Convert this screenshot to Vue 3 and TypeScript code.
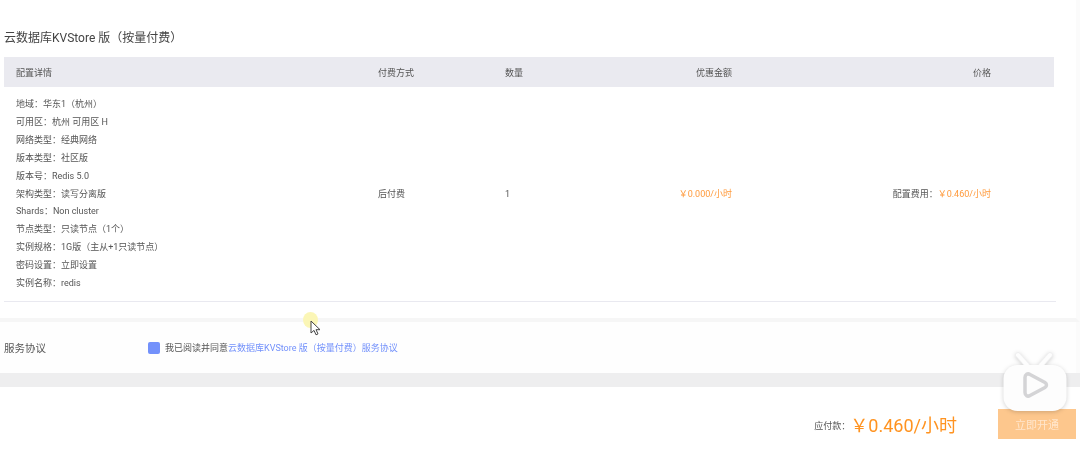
<script setup lang="ts">
const C = '\uFF1A'
const L = '\uFF08'
const R = '\uFF09'
const Y = '\uFFE5'
const title = `云数据库KVStore 版${L}按量付费${R}`
const details: string[] = [
  `地域${C}华东1${L}杭州${R}`,
  `可用区${C}杭州 可用区 H`,
  `网络类型${C}经典网络`,
  `版本类型${C}社区版`,
  `版本号${C}Redis 5.0`,
  `架构类型${C}读写分离版`,
  `Shards${C}Non cluster`,
  `节点类型${C}只读节点${L}1个${R}`,
  `实例规格${C}1G版${L}主从+1只读节点${R}`,
  `密码设置${C}立即设置`,
  `实例名称${C}redis`,
]
const discount = `${Y}0.000/小时`
const fee = `${Y}0.460/小时`
const feeLabel = `配置费用${C}`
const payLabel = `应付款${C}`
</script>

<template>
  <div class="page">
    <section class="order">
      <h2 class="title">{{ title }}</h2>
      <div class="thead cols">
        <span>配置详情</span>
        <span>付费方式</span>
        <span>数量</span>
        <span class="right">优惠金额</span>
        <span class="right">价格</span>
      </div>
      <div class="tbody cols">
        <div class="details">
          <div v-for="d in details" :key="d">{{ d }}</div>
        </div>
        <span>后付费</span>
        <span>1</span>
        <span class="right orange">{{ discount }}</span>
        <span class="right">{{ feeLabel }}<span class="orange">{{ fee }}</span></span>
      </div>
    </section>

    <section class="agree">
      <span class="agree-label">服务协议</span>
      <span class="check"></span>
      <span class="agree-text">我已阅读并同意<span class="link">{{ title }}服务协议</span></span>
    </section>

    <section class="pay">
      <span class="pay-label">{{ payLabel }}</span>
      <span class="pay-amount">{{ fee }}</span>
      <button class="pay-btn" type="button">立即开通</button>
    </section>

    <div class="cursor">
      <span class="halo"></span>
      <svg width="12" height="16" viewBox="0 0 12 16">
        <path d="M1 1v12l3-2.600 2 4.400 2-.9-2-4.200h4z" fill="#fff" stroke="#444" stroke-width="1" stroke-linejoin="round" />
      </svg>
    </div>

    <svg class="tv" width="66" height="62" viewBox="0 0 66 62">
      <path d="M25 13 16 3M39 13l9-10" stroke="#efeff0" stroke-width="5.500" stroke-linecap="round" />
      <path d="M25 13 16 3M39 13l9-10" stroke="#fdfdfd" stroke-width="4" stroke-linecap="round" />
      <rect x="1.500" y="13" width="63" height="46" rx="14" fill="#fdfdfd" />
      <path d="M23 25.500c0-3 2.600-4.500 5-3l15 8c2 1.200 2 3.800 0 5l-15 8c-2.400 1.500-5 0-5-3z" fill="#fdfdfd" stroke="#d4d4d6" stroke-width="3.500" stroke-linejoin="round" />
    </svg>
  </div>
</template>

<style>
html, body { margin: 0; background: #fff; }
</style>

<style scoped>
.page {
  position: relative;
  width: 1080px;
  height: 460px;
  overflow: hidden;
  background: #eeeeef;
  font-family: Roboto, "Noto Sans CJK SC", sans-serif;
  color: #555;
  display: flex;
  flex-direction: column;
  filter: blur(0.45px);
}
.order {
  height: 322px;
  box-sizing: border-box;
  background: #fff;
  padding: 29px 22px 0 4px;
  border-right: 4px solid #fbfbfb;
  border-bottom: 4px solid #f6f6f6;
}
.title {
  margin: 0;
  height: 28px;
  font-size: 12px;
  line-height: 18px;
  font-weight: 400;
  color: #444;
}
.cols {
  display: grid;
  grid-template-columns: 362px 127px 100px 127px 259px;
  padding: 0 63px 0 12px;
  font-size: 9px;
}
.thead {
  height: 30px;
  align-items: center;
  background: #eaeaf0;
  color: #555;
}
.tbody {
  height: 215px;
  box-sizing: border-box;
  align-items: center;
  border-bottom: 1px solid #e9e9f0;
  margin-right: -2px;
  padding-right: 65px;
  padding-bottom: 1px;
}
.details { line-height: 17.900px; padding-top: 2px; }
.right { text-align: right; }
.orange { color: #ff9a3c; }
.agree {
  height: 51px;
  background: #fefefe;
  border-right: 4px solid #fbfbfb;
  display: flex;
  align-items: center;
  padding-left: 4px;
  box-sizing: border-box;
}
.agree-label { width: 144px; font-size: 10.500px; color: #555; }
.check {
  width: 12px;
  height: 12px;
  border-radius: 2px;
  background: #7391fb;
  margin-right: 5px;
}
.agree-text { font-size: 9px; color: #555; }
.link { color: #7391fb; }
.pay {
  margin-top: 14px;
  height: 73px;
  background: #fff;
  display: flex;
  align-items: center;
  padding-right: 4px;
  justify-content: flex-end;
  padding-top: 1px;
  box-sizing: border-box;
}
.pay-label { font-size: 9px; color: #555; margin-right: 0; margin-top: 3px; }
.pay-amount { font-size: 18px; color: #ff9320; margin-right: 41px; }
.pay-btn {
  width: 78px;
  height: 30px;
  border: 0;
  padding: 0;
  background: #fdc78d;
  color: #ffe6cc;
  font: inherit;
  font-size: 11px;
}
.cursor { position: absolute; left: 310px; top: 320px; width: 12px; height: 16px; }
.cursor svg { position: absolute; left: 0; top: 0; }
.halo {
  position: absolute;
  left: -7px;
  top: -8px;
  width: 15px;
  height: 16px;
  border-radius: 50%;
  background: #fbf6b6;
}
.tv { position: absolute; left: 1002px; top: 352px; filter: drop-shadow(0 1px 2px rgba(0, 0, 0, 0.18)); }
</style>
